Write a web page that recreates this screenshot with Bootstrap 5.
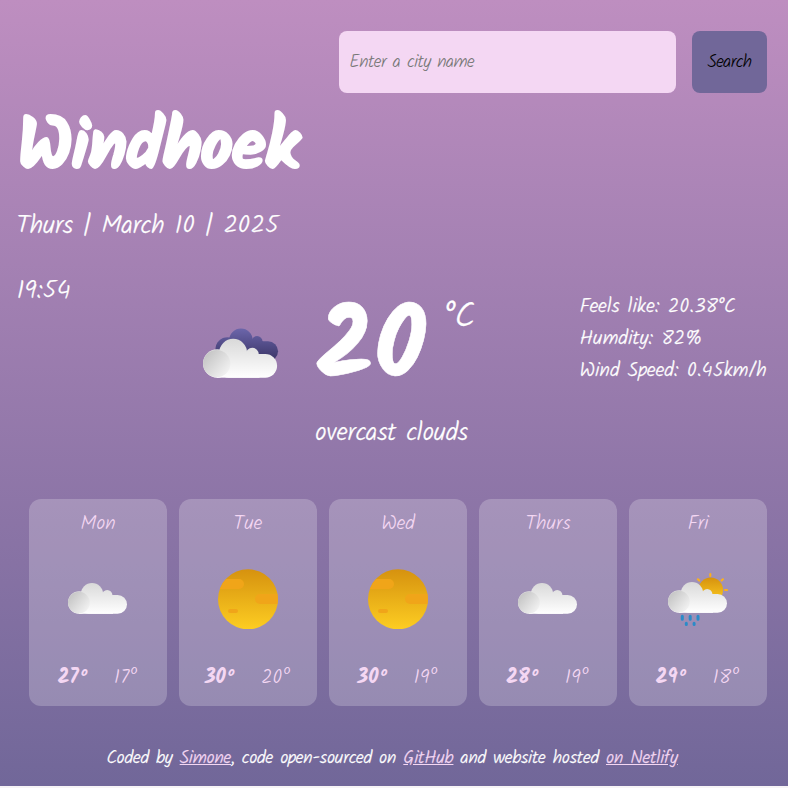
<!DOCTYPE html>
<html lang="en">
<head>
<meta charset="utf-8">
<meta name="viewport" content="width=device-width, initial-scale=1">
<title>Weather in Windhoek</title>
<link rel="stylesheet" href="https://cdn.jsdelivr.net/npm/bootstrap@5.3.0/dist/css/bootstrap.min.css">
<style>
body{background:#f6f4f6;font-family:Kalam,Lato,sans-serif;font-weight:300;color:#fff;white-space:nowrap}
.weather-app{height:786px;padding:31px 21px 0 17px;background:linear-gradient(#be8ec0,#716799)}
.search-bar{height:62px;gap:16px}
.city-input{width:337px;background:#f4d7f3!important;border:0;border-radius:8px;padding:0 10px;font-size:18px;font-weight:300;letter-spacing:-.6px}
.city-input::placeholder{color:#777;opacity:1}
.search-btn{width:75px;background:#716799;border:0;border-radius:8px;color:#000;font-size:18px;font-weight:300;letter-spacing:-.65px;padding:0}
.city-name{font-size:72px;line-height:86px;font-weight:700;margin:14px 0 0;letter-spacing:-2.2px;-webkit-text-stroke:2px #fff}
.date-line,.time-line,.sky-text{font-size:25.6px;line-height:32px;letter-spacing:-.25px;-webkit-text-stroke:.25px #fff}
.date-line{margin:18px 0 0 -.5px}
.time-line{margin:33px 0 0 -.5px}
.current{height:102px;margin-top:-22px}
.current-icon{width:76px;height:50px;margin:42px 0 0 186px;flex:none}
.current-temp{font-size:100px;line-height:102px;font-weight:700;margin:14px 0 0 37px;width:128px;-webkit-text-stroke:.5px #fff}
.unit{font-size:35px;line-height:40px;margin-top:12px;-webkit-text-stroke:.25px #fff}
.details{width:187.5px;font-size:20px;line-height:32px;margin-top:5px;-webkit-text-stroke:.25px #fff}
.sky-text{margin:30px 0 0 298px}
.forecast{margin:49px 0 0 12px;gap:12px}
.day-card{height:207px;border-radius:12px;background:rgba(255,255,255,.22);color:#f4d7f3;padding-top:13px;font-size:20px;line-height:24px}
.day-card svg{width:60px;height:60px;margin-top:33px}
.temps{margin-top:37px;gap:26px}
.hi{font-weight:700}
.credits{margin-top:39px;font-size:18px;line-height:28px;letter-spacing:-.22px;-webkit-text-stroke:.25px}
.credits a{color:#f4d7f3}
</style>
<script src="https://cdn.jsdelivr.net/npm/bootstrap@5.3.0/dist/js/bootstrap.bundle.min.js"></script>
</head>
<body>
<svg width="0" height="0" class="position-absolute" aria-hidden="true">
  <defs>
    <linearGradient id="gCloud" gradientUnits="userSpaceOnUse" x1="0" y1="14" x2="0" y2="45"><stop stop-color="#d9d9d9"/><stop offset="1" stop-color="#fff"/></linearGradient>
    <linearGradient id="gPuff" x1=".15" y1=".15" x2=".9" y2=".8"><stop stop-color="#c6c6c6"/><stop offset="1" stop-color="#f1f1f1"/></linearGradient>
    <linearGradient id="gDark" gradientUnits="userSpaceOnUse" x1="0" y1="14" x2="0" y2="45"><stop stop-color="#6b65aa"/><stop offset="1" stop-color="#393364"/></linearGradient>
    <linearGradient id="gSun" x1="0" y1="0" x2="0" y2="1"><stop stop-color="#d6920f"/><stop offset="1" stop-color="#fdcd22"/></linearGradient>
    <clipPath id="sunClip"><circle cx="30" cy="30.3" r="30"/></clipPath>
    <g id="cloudShape"><circle cx="11.3" cy="33.5" r="11.3"/><circle cx="24" cy="25" r="11.1"/><circle cx="39.2" cy="26.2" r="5.2"/><rect x="11" y="26" width="48" height="18.8" rx="9.4"/><rect x="11" y="26" width="34" height="18.8"/></g>
    <g id="cloud"><use href="#cloudShape" fill="url(#gCloud)"/><circle cx="10.9" cy="33.6" r="10.9" fill="url(#gPuff)"/></g>
    <g id="sun"><circle cx="30" cy="30.3" r="30" fill="url(#gSun)"/><g fill="#f0a519" clip-path="url(#sunClip)"><rect x="-8" y="10" width="34" height="10" rx="5"/><rect x="37" y="25" width="34" height="10" rx="5"/><rect x="10" y="40" width="10" height="4" rx="2"/></g></g>
  </defs>
</svg>
<main class="weather-app">
  <form class="search-bar d-flex justify-content-end" onsubmit="return false">
    <input class="city-input form-control" type="search" placeholder="Enter a city name" aria-label="City">
    <button class="search-btn btn" type="submit">Search</button>
  </form>
  <h1 class="city-name">Windhoek</h1>
  <div class="date-line">Thurs | March 10 | 2025</div>
  <div class="time-line">19:54</div>
  <section class="current d-flex align-items-start">
    <svg class="current-icon" viewBox="203 328 76 50"><g transform="translate(215.5 314) scale(1.06 1.05)"><use href="#cloudShape" fill="url(#gDark)"/></g><g transform="translate(203 321.4) scale(1.256)"><use href="#cloud"/></g></svg>
    <div class="current-temp">20</div>
    <div class="unit">°C</div>
    <div class="details ms-auto"><div>Feels like: 20.38°C</div><div>Humdity: 82%</div><div>Wind Speed: 0.45km/h</div></div>
  </section>
  <div class="sky-text">overcast clouds</div>
  <section class="forecast row row-cols-5 flex-nowrap text-center gx-0">
    <div class="day-card col flex-fill"><div>Mon</div><svg viewBox="0 0 60 60"><use href="#cloud"/></svg><div class="temps d-flex justify-content-center"><span class="hi">27º</span><span>17º</span></div></div>
    <div class="day-card col flex-fill"><div>Tue</div><svg viewBox="0 0 60 60"><use href="#sun"/></svg><div class="temps d-flex justify-content-center"><span class="hi">30º</span><span>20º</span></div></div>
    <div class="day-card col flex-fill"><div>Wed</div><svg viewBox="0 0 60 60"><use href="#sun"/></svg><div class="temps d-flex justify-content-center"><span class="hi">30º</span><span>19º</span></div></div>
    <div class="day-card col flex-fill"><div>Thurs</div><svg viewBox="0 0 60 60"><use href="#cloud"/></svg><div class="temps d-flex justify-content-center"><span class="hi">28º</span><span>19º</span></div></div>
    <div class="day-card col flex-fill"><div>Fri</div><svg viewBox="0 0 60 60"><circle cx="42.7" cy="21" r="12.4" fill="url(#gSun)"/><path d="M42.3 5v2M57 21h2M53.6 11.6l1.3-1.3M31.2 11.6l-1.3-1.3" stroke="#fcb01c" stroke-width="2.1" stroke-linecap="round"/><use href="#cloud" y="-1"/><path d="M14.3 47.3v3M22.2 47.3v3M30 47.3v3M18.3 54.3v1.2M26.1 54.3v1.2" stroke="#2b8bc8" stroke-width="3" stroke-linecap="round"/></svg><div class="temps d-flex justify-content-center"><span class="hi">29º</span><span>18º</span></div></div>
  </section>
  <footer class="credits text-center">Coded by <a href="#">Simone</a>, code open-sourced on <a href="#">GitHub</a> and website hosted <a href="#">on Netlify</a></footer>
</main>
</body>
</html>
